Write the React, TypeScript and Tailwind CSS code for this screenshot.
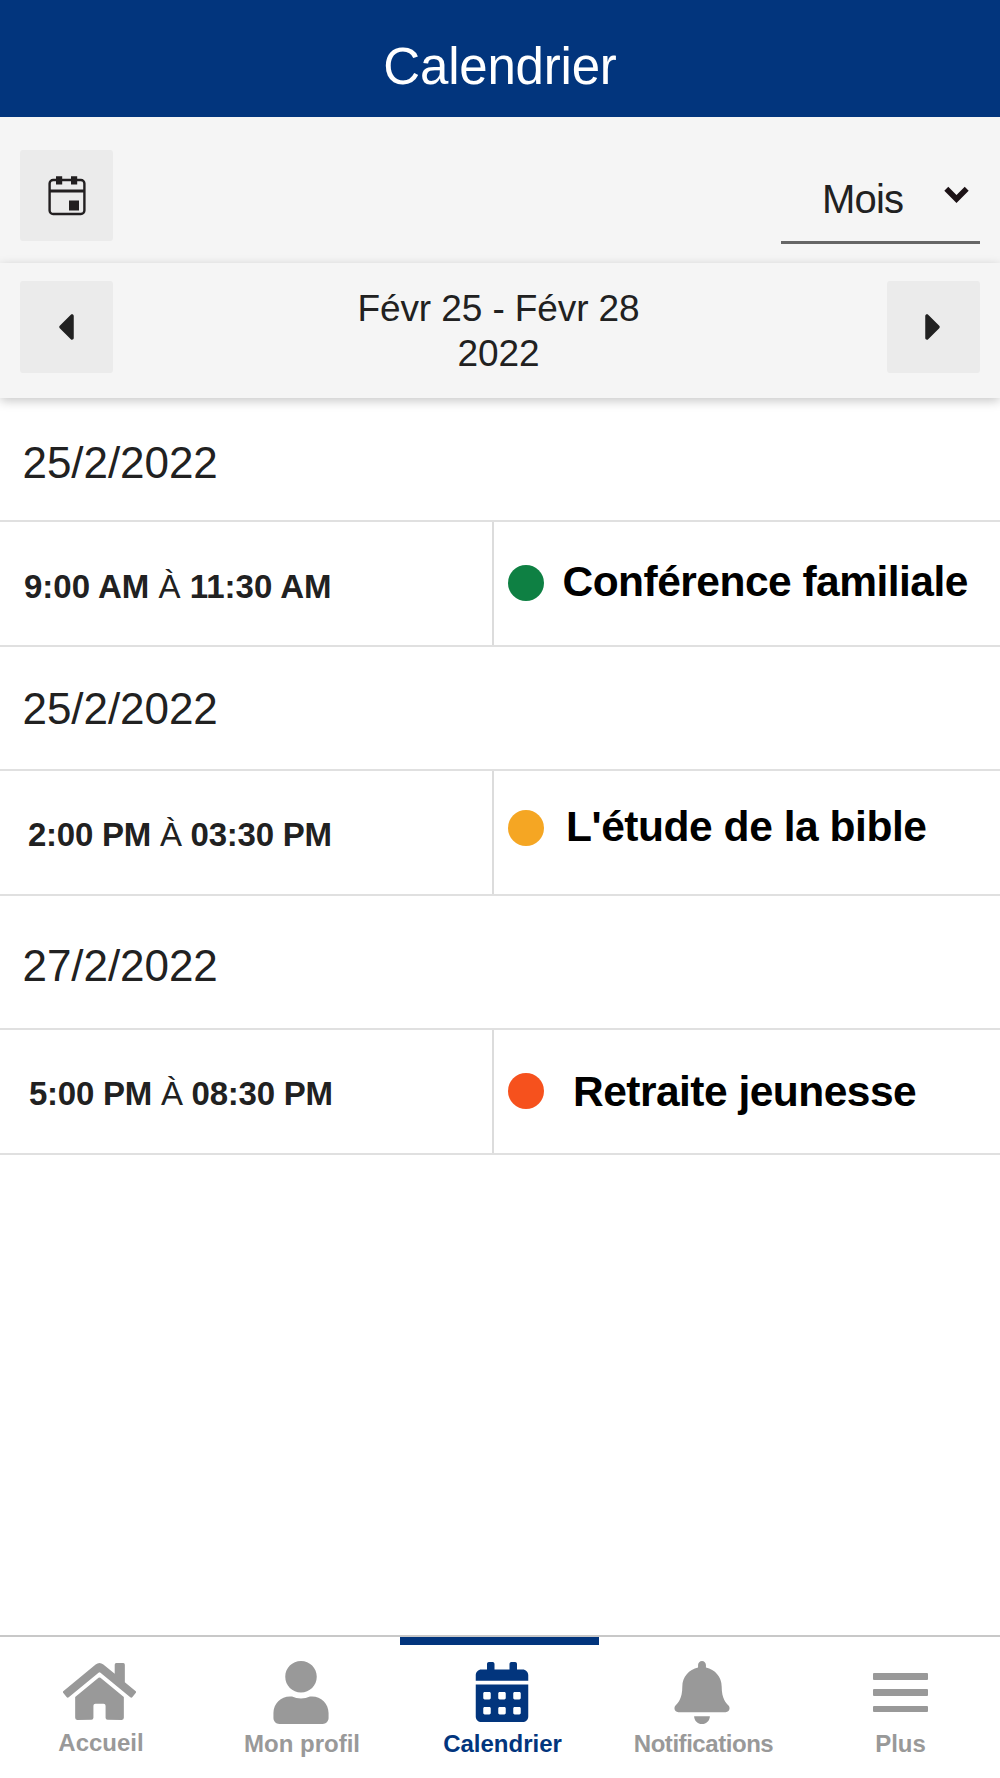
import React, { useState } from 'react';
import { FaBell, FaCalendarAlt, FaCaretLeft, FaCaretRight, FaHome, FaUser } from 'react-icons/fa';

type CalendarEvent = {
  id: number;
  date: string;
  start: string;
  end: string;
  title: string;
  dateClass: string;
  timeClass: string;
  dotClass: string;
  titleClass: string;
};

const EVENTS: CalendarEvent[] = [
  {
    id: 1,
    date: '25/2/2022',
    start: '9:00 AM',
    end: '11:30 AM',
    title: 'Conférence familiale',
    dateClass: 'h-[122px] pt-[43px]',
    timeClass: 'pl-[24px] pt-12',
    dotClass: 'mt-[43px] bg-[#0e8043]',
    titleClass: 'ml-[18.5px] mt-[39px] tracking-[-0.52px]',
  },
  {
    id: 2,
    date: '25/2/2022',
    start: '2:00 PM',
    end: '03:30 PM',
    title: "L'étude de la bible",
    dateClass: 'h-[122px] pt-[40px]',
    timeClass: 'pl-[28px] pt-[47px] tracking-[-0.25px]',
    dotClass: 'mt-[39px] bg-[#f5a623]',
    titleClass: 'ml-[22px] mt-[35px] tracking-[-0.45px]',
  },
  {
    id: 3,
    date: '27/2/2022',
    start: '5:00 PM',
    end: '08:30 PM',
    title: 'Retraite jeunesse',
    dateClass: 'h-[132px] pt-[48px]',
    timeClass: 'pl-[29px] pt-[47px] tracking-[-0.25px]',
    dotClass: 'mt-[43px] bg-[#f6511d]',
    titleClass: 'ml-[29px] mt-[41px] tracking-[-0.52px]',
  },
];

const MenuBars = () => (
  <span className="mt-[12px] flex h-[39px] w-[55px] flex-col justify-between">
    <span className="h-[6.5px] rounded-[1px] bg-current" />
    <span className="h-[6.5px] rounded-[1px] bg-current" />
    <span className="h-[6.5px] rounded-[1px] bg-current" />
  </span>
);

const TABS = [
  { id: 'home', label: 'Accueil', icon: <FaHome className="-mt-[2px] h-[65px] w-[73px]" />, iconClass: 'pr-[2px]', labelClass: 'mt-[4px] pl-[2px]' },
  { id: 'profile', label: 'Mon profil', icon: <FaUser className="h-[63px] w-[56px]" />, iconClass: 'pl-[2px]', labelClass: 'mt-[5px] pl-[4px]' },
  { id: 'calendar', label: 'Calendrier', icon: <FaCalendarAlt className="mt-px h-[60px] w-[54px]" />, iconClass: 'pl-[3px]', labelClass: 'mt-[5px] pl-[5px]' },
  { id: 'notifications', label: 'Notifications', icon: <FaBell className="h-[63px] w-[56px]" />, iconClass: 'pl-[4px]', labelClass: 'mt-[5px] pl-[7px] tracking-[-0.45px]' },
  { id: 'more', label: 'Plus', icon: <MenuBars />, iconClass: 'pl-px', labelClass: 'mt-[5px] pl-px' },
];

const DayIcon = () => (
  <svg width="38" height="40" viewBox="0 0 38 40" fill="none">
    <rect x="1.6" y="4" width="34.8" height="34" rx="3.5" stroke="#221f20" strokeWidth="2.4" />
    <path d="M2 15h34" stroke="#221f20" strokeWidth="2.8" />
    <path d="M8 0.3h6.2v8.2H8zM23 0.3h6.2v8.2H23zM21 24.5h10v10H21z" fill="#221f20" />
  </svg>
);

const EventRow: React.FC<{ event: CalendarEvent }> = ({ event }) => (
  <section>
    <h2 className={`pl-[22.5px] text-[44px] leading-none tracking-[-0.05px] ${event.dateClass}`}>{event.date}</h2>
    <div className="flex h-[127px] border-y-2 border-[#e0e0e0]">
      <div className={`w-[494px] border-r-2 border-[#dcdcdc] text-[33px] leading-none whitespace-nowrap ${event.timeClass}`}>
        <b>{event.start}</b> À <b>{event.end}</b>
      </div>
      <div className="flex flex-1 items-start pl-[14px]">
        <span className={`size-9 shrink-0 rounded-full ${event.dotClass}`} />
        <h3 className={`text-[42.5px] leading-none font-bold whitespace-nowrap text-black ${event.titleClass}`}>{event.title}</h3>
      </div>
    </div>
  </section>
);

export default function App() {
  const [activeTab, setActiveTab] = useState('calendar');

  return (
    <div className="flex h-[1778px] w-[1000px] flex-col overflow-hidden bg-white font-['Liberation_Sans',Arial,sans-serif] text-[#212121]">
      <header className="h-[117px] shrink-0 bg-[#02357d] pt-[41px] text-center text-[51px] leading-none tracking-[-0.2px] text-white">
        <h1>Calendrier</h1>
      </header>

      <div className="flex h-[146px] shrink-0 items-start justify-between bg-[#f5f5f5] px-5">
        <button className="mt-[33px] flex h-[91px] w-[93px] items-center justify-center rounded-[3px] bg-[#ebebeb]">
          <DayIcon />
        </button>
        <button className="mt-[33px] flex h-[94px] w-[199px] items-start border-b-3 border-[#666] pt-[29px] pl-[41px] text-[40px] leading-none tracking-[-0.8px]">
          Mois
          <svg className="mt-[7px] mr-[11px] ml-auto" width="25" height="17" viewBox="0 0 25 17" fill="none">
            <path d="M2.3 2.8L12.5 13L22.7 2.8" stroke="#1c1216" strokeWidth="5.6" />
          </svg>
        </button>
      </div>

      <div className="relative flex h-[135px] shrink-0 items-start justify-between bg-[#f5f5f5] px-5 pt-[18px] shadow-[0_3px_10px_rgba(0,0,0,0.22)]">
        <button className="flex h-[92px] w-[93px] items-center justify-center rounded-[3px] bg-[#ebebeb] pr-[2px]">
          <FaCaretLeft className="h-[44px] w-[17px]" />
        </button>
        <p className="mt-[5px] pr-[3px] text-center text-[37px] leading-[45px] tracking-[-0.1px]">
          Févr 25 - Févr 28
          <br />
          2022
        </p>
        <button className="flex h-[92px] w-[93px] items-center justify-center rounded-[3px] bg-[#ebebeb] pr-px">
          <FaCaretRight className="h-[44px] w-[17px]" />
        </button>
      </div>

      <main className="flex-1">
        {EVENTS.map((event) => (
          <EventRow key={event.id} event={event} />
        ))}
      </main>

      <nav className="flex h-[143px] shrink-0 border-t-2 border-[#c8c8c8]">
        {TABS.map((tab) => (
          <button
            key={tab.id}
            onClick={() => setActiveTab(tab.id)}
            className={`flex w-[200px] flex-col items-center ${activeTab === tab.id ? 'text-[#02357d]' : 'text-[#999]'}`}
          >
            <span className={`mr-px h-[8px] w-[199px] ${activeTab === tab.id ? 'bg-[#02357d]' : ''}`} />
            <span className={`mt-4 flex h-[66px] items-start ${tab.iconClass}`}>{tab.icon}</span>
            <span className={`text-[24px] leading-none font-bold whitespace-nowrap ${tab.labelClass}`}>{tab.label}</span>
          </button>
        ))}
      </nav>
    </div>
  );
}
